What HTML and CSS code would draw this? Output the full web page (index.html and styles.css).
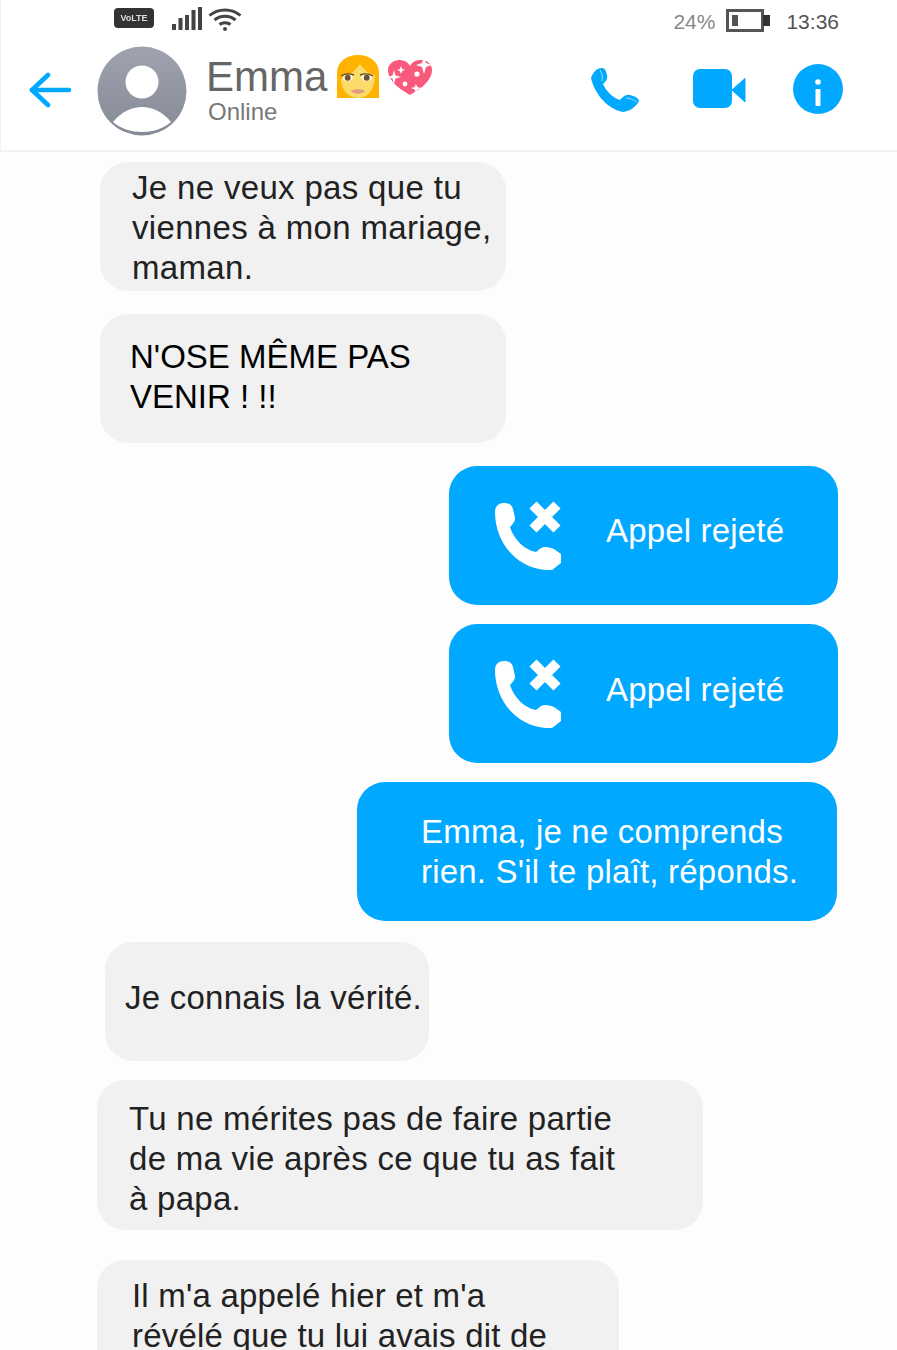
FILE: index.html
```html
<!DOCTYPE html>
<html lang="fr">
<head>
    <meta charset="UTF-8">
    <meta name="viewport" content="width=device-width, initial-scale=1.0">
    <title>Emma</title>
    <link rel="stylesheet" href="styles.css">
</head>
<body>
    <div class="phone">
        <div class="status-bar">
            <div class="status-left">
                <span class="volte">VoLTE</span>
                <svg class="signal" width="32" height="24" viewBox="0 0 32 24">
                    <rect x="1" y="17" width="4" height="6" fill="#444"/>
                    <rect x="7.500" y="11" width="4" height="12" fill="#444"/>
                    <rect x="14" y="8" width="4" height="15" fill="#444"/>
                    <rect x="20.500" y="3" width="4" height="20" fill="#444"/>
                    <rect x="27" y="0" width="4" height="23" fill="#444"/>
                </svg>
                <svg class="wifi" width="34" height="24" viewBox="0 0 34 24" fill="none" stroke="#444" stroke-width="3">
                    <path d="M1.500 8.500C10 1 24 1 32.500 8.500"/>
                    <path d="M6.500 13C12.500 8 21.500 8 27.500 13"/>
                    <path d="M11.500 17.500C14.500 15 19.500 15 22.500 17.500"/>
                    <circle cx="17" cy="22" r="2" fill="#444" stroke="none"/>
                </svg>
            </div>
            <div class="status-right">
                <span class="battery-pct">24%</span>
                <svg class="battery" width="45" height="23" viewBox="0 0 45 23">
                    <rect x="1.500" y="1.500" width="35" height="20" fill="#fff" stroke="#555" stroke-width="3"/>
                    <rect x="6" y="6" width="6" height="11" fill="#555"/>
                    <rect x="37" y="6" width="7" height="11" fill="#333"/>
                </svg>
                <span class="clock">13:36</span>
            </div>
        </div>

        <header class="chat-header">
            <svg class="back" width="44" height="36" viewBox="0 0 44 36" fill="none" stroke="#00a8ff" stroke-width="4.600" stroke-linecap="round" stroke-linejoin="round">
                <path d="M40 18H3"/>
                <path d="M19 3L3 18L19 33"/>
            </svg>
            <svg class="avatar" width="90" height="90" viewBox="0 0 90 90">
                <defs>
                    <linearGradient id="avatar-fill" x1="0" y1="0" x2="0" y2="1">
                        <stop offset="0" stop-color="#9ea3af"/>
                        <stop offset="1" stop-color="#858a96"/>
                    </linearGradient>
                </defs>
                <circle cx="45" cy="45" r="44.500" fill="url(#avatar-fill)"/>
                <circle cx="45" cy="36" r="16.500" fill="#fff"/>
                <path d="M16 76C24 66 35 61 45 61C55 61 66 66 74 76C66 83 55 86 45 86C35 86 24 83 16 76Z" fill="#fff"/>
            </svg>
            <div class="contact">
                <div class="contact-name">
                    <span>Emma</span>
                    <svg class="emoji-woman" width="42" height="44" viewBox="0 0 42 44">
                        <path d="M0 43V18C0 7 9 0 21 0C33 0 42 7 42 18V43Z" fill="#ffb300"/>
                        <path d="M4 24C12 21 19 15 23 9C27 15 32 19 38 20C38 34 31 43 21 43C11 43 4 34 4 24Z" fill="#fbdc6a"/>
                        <ellipse cx="10.700" cy="22.700" rx="5" ry="3.400" fill="#fff"/>
                        <ellipse cx="29.700" cy="22.700" rx="5" ry="3.400" fill="#fff"/>
                        <circle cx="10.700" cy="22.700" r="3" fill="#6e5330"/>
                        <circle cx="29.700" cy="22.700" r="3" fill="#6e5330"/>
                        <path d="M4 21C8 18.500 13 18.500 17 20M36 21C32 18.500 27 18.500 23 20" fill="none" stroke="#5c4a22" stroke-width="1.400"/>
                        <path d="M14 36C17 33.500 25 33.500 28 36C25 39.500 17 39.500 14 36Z" fill="#e59a80"/>
                    </svg>
                    <svg class="emoji-heart" width="44" height="35" viewBox="0 0 44 35">
                        <path d="M22 35C14 30 0 22 0 10C0 4 6 0 11 0C16 0 20 2 22 6C24 2 28 0 33 0C39 0 44 4 44 10C44 22 30 30 22 35Z" fill="#f95a7c"/>
                        <path d="M36 -3L38 3L44 5L38 7L36 14L34 7L28 5L34 3Z" fill="#fff"/>
                        <path d="M13 6L14.200 9L17 10L14.200 11L13 14L11.800 11L9 10L11.800 9Z" fill="#fff"/>
                        <path d="M6 10L7.500 15.500L13 17L7.500 18.500L6 24L4.500 18.500L-1 17L4.500 15.500Z" fill="#fff"/>
                        <circle cx="29" cy="14" r="2.600" fill="#fff"/>
                        <circle cx="17" cy="24" r="2.400" fill="#fff"/>
                        <path d="M28 24L29.300 27L33 28L29.300 29.500L28 33L26.700 29.500L23 28L26.700 27Z" fill="#fff"/>
                    </svg>
                </div>
                <div class="contact-status">Online</div>
            </div>
            <div class="actions">
                <svg class="action-phone" width="50" height="46" viewBox="0 0 50 46">
                    <path d="M1 11C3 5 7 1 12 1C15 1 16 4 17 8C18 12 16 14 13 17C16 24 23 31 30 33C33 30 36 27 40 28C44 29 49 31 49 34C46 40 40 44 33 45C18 42 5 28 1 11Z" fill="#00a8ff"/>
                    <path d="M10 3C12 6 13 10 12 14M36 31C40 31 44 33 47 35" fill="none" stroke="#fff" stroke-width="1" opacity="0.6"/>
                </svg>
                <svg class="action-video" width="53" height="40" viewBox="0 0 53 40">
                    <rect x="0" y="0" width="39" height="39" rx="7" fill="#00a8ff"/>
                    <path d="M39 21L52 9.500V33Z" fill="#00a8ff" stroke="#00a8ff" stroke-width="1" stroke-linejoin="round"/>
                </svg>
                <svg class="action-info" width="50" height="50" viewBox="0 0 50 50">
                    <circle cx="25" cy="25" r="25" fill="#00a8ff"/>
                    <circle cx="25" cy="18" r="2.800" fill="#fff"/>
                    <rect x="22.500" y="25" width="5" height="17" rx="1" fill="#fff"/>
                </svg>
            </div>
        </header>

        <main class="messages">
            <div class="bubble in msg-1">Je ne veux pas que tu<br>viennes à mon mariage,<br>maman.</div>
            <div class="bubble in msg-2">N'OSE MÊME PAS<br>VENIR ! !!</div>
            <div class="bubble out call msg-3">
                <svg class="call-icon" width="68" height="70" viewBox="0 0 68 70">
                    <path d="M1 12C1 6 5 3 10 3C15 3 18 5 19 9L21 18C21.500 21 19 24 16 27C20 40 31 50 42 52L47 48C50 46 55 47 60 49L67 54V63L58 70H52C22 68 1 42 1 12Z" fill="#fff"/>
                    <path d="M39 5L63 29M63 5L39 29" stroke="#fff" stroke-width="10"/>
                </svg>
                <span class="call-label">Appel rejeté</span>
            </div>
            <div class="bubble out call msg-4">
                <svg class="call-icon" width="68" height="70" viewBox="0 0 68 70">
                    <path d="M1 12C1 6 5 3 10 3C15 3 18 5 19 9L21 18C21.500 21 19 24 16 27C20 40 31 50 42 52L47 48C50 46 55 47 60 49L67 54V63L58 70H52C22 68 1 42 1 12Z" fill="#fff"/>
                    <path d="M39 5L63 29M63 5L39 29" stroke="#fff" stroke-width="10"/>
                </svg>
                <span class="call-label">Appel rejeté</span>
            </div>
            <div class="bubble out msg-5">Emma, je ne comprends<br>rien. S'il te plaît, réponds.</div>
            <div class="bubble in msg-6">Je connais la vérité.</div>
            <div class="bubble in msg-7">Tu ne mérites pas de faire partie<br>de ma vie après ce que tu as fait<br>à papa.</div>
            <div class="bubble in msg-8">Il m'a appelé hier et m'a<br>révélé que tu lui avais dit de</div>
        </main>
    </div>
</body>
</html>
```

FILE: styles.css
```css
html, body {
    margin: 0;
    padding: 0;
}

body {
    font-family: "Liberation Sans", Arial, sans-serif;
    background: #fdfdfd;
}

.phone {
    width: 897px;
    height: 1350px;
    overflow: hidden;
    box-sizing: border-box;
}

.status-bar {
    height: 40px;
    display: flex;
    justify-content: space-between;
    align-items: center;
    background: #fff;
    border-left: 1px solid #f0f1f6;
    padding: 0 58px 0 113px;
    box-sizing: border-box;
}

.status-left,
.status-right {
    display: flex;
    align-items: center;
}

.status-left {
    filter: blur(0.5px);
}

.volte {
    width: 40px;
    height: 20px;
    margin: 0 17px 4px 0;
    background: #333;
    color: #ddd;
    border-radius: 4px;
    font-size: 9px;
    font-weight: bold;
    line-height: 20px;
    text-align: center;
}

.signal,
.wifi {
    margin-top: -2px;
}

.wifi {
    margin-left: 5px;
}

.battery-pct {
    color: #888;
    font-size: 21px;
    padding-top: 3px;
    margin-right: 11px;
}

.battery {
    margin-top: 1px;
}

.clock {
    color: #555;
    font-size: 21px;
    padding-top: 3px;
    margin-left: 15px;
}

.chat-header {
    height: 112px;
    display: flex;
    align-items: center;
    background: #fff;
    border-left: 1px solid #f0f1f6;
    border-bottom: 2px solid #f3f3f3;
    box-sizing: border-box;
    padding: 0 54px 10px 28px;
}

.avatar {
    margin: 2px 0 0 24px;
    flex: none;
}

.contact {
    margin-left: 19px;
    flex: 1;
}

.contact-name {
    display: flex;
    align-items: center;
    height: 46px;
    font-size: 42px;
    color: #666;
}

.emoji-woman {
    margin-left: 10px;
}

.emoji-heart {
    margin-left: 9px;
    overflow: visible;
}

.contact-status {
    margin: -2px 0 0 2px;
    font-size: 24px;
    line-height: 28px;
    color: #777;
}

.actions {
    display: flex;
    align-items: center;
    margin-top: -2px;
}

.action-phone {
    margin-top: 2px;
}

.action-video {
    margin-left: 53px;
}

.action-info {
    margin-left: 47px;
}

.messages {
    display: flow-root;
}

.bubble {
    box-sizing: border-box;
    border-radius: 28px;
    font-size: 33px;
    line-height: 40px;
}

.in {
    background: #f1f1f1;
    color: #222;
}

.out {
    background: #00a8ff;
    color: #fff;
}

.call {
    width: 389px;
    height: 139px;
    margin-left: 449px;
    padding: 34px 0 0 45px;
    display: flex;
    align-items: flex-start;
    letter-spacing: 0.17px;
}

.call-label {
    margin-left: 44px;
    padding-top: 11px;
}

.msg-1 {
    width: 406px;
    height: 129px;
    margin: 10px 0 0 100px;
    padding: 6px 0 0 32px;
    letter-spacing: 0.33px;
}

.msg-2 {
    width: 406px;
    height: 129px;
    margin: 23px 0 0 100px;
    padding: 23px 0 0 30px;
    color: #000;
}

.msg-3 {
    margin-top: 23px;
}

.msg-4 {
    margin-top: 19px;
}

.msg-4 .call-label {
    padding-top: 12px;
}

.msg-5 {
    width: 480px;
    height: 139px;
    margin: 19px 0 0 357px;
    padding: 30px 0 0 64px;
    letter-spacing: 0.2px;
}

.msg-6 {
    width: 324px;
    height: 119px;
    margin: 21px 0 0 105px;
    padding: 36px 0 0 20px;
    letter-spacing: 0.25px;
}

.msg-7 {
    width: 606px;
    height: 150px;
    margin: 19px 0 0 97px;
    padding: 19px 0 0 32px;
    letter-spacing: 0.28px;
}

.msg-8 {
    width: 522px;
    height: 130px;
    margin: 30px 0 0 97px;
    padding: 16px 0 0 35px;
    letter-spacing: 0.2px;
}
```
